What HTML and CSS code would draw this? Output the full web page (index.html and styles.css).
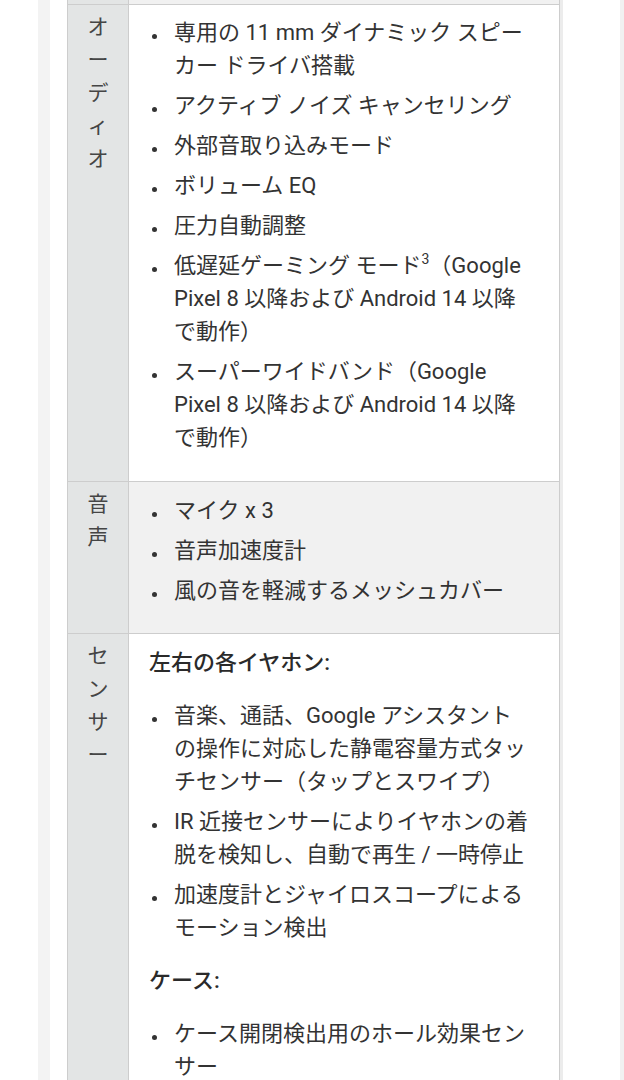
FILE: index.html
```html
<!DOCTYPE html>
<html lang="ja">
<head>
<meta charset="utf-8">
<title>仕様</title>
<link rel="stylesheet" href="styles.css">
</head>
<body>
<div class="page">
  <div class="frame">
    <table class="spec">
      <tr class="row-tail alt">
        <th></th>
        <td></td>
      </tr>
      <tr class="audio">
        <th>オーディオ</th>
        <td>
          <ul>
            <li><span>専用の 11 mm ダイナミック スピーカー ドライバ搭載</span></li>
            <li><span>アクティブ ノイズ キャンセリング</span></li>
            <li><span>外部音取り込みモード</span></li>
            <li><span>ボリューム EQ</span></li>
            <li><span>圧力自動調整</span></li>
            <li><span>低遅延ゲーミング モード<sup>3</sup>（Google Pixel 8 以降および Android 14 以降で動作）</span></li>
            <li><span>スーパーワイドバンド（Google Pixel 8 以降および Android 14 以降で動作）</span></li>
          </ul>
        </td>
      </tr>
      <tr class="alt">
        <th>音声</th>
        <td>
          <ul>
            <li><span>マイク x 3</span></li>
            <li><span>音声加速度計</span></li>
            <li><span>風の音を軽減するメッシュカバー</span></li>
          </ul>
        </td>
      </tr>
      <tr>
        <th>センサー</th>
        <td>
          <p class="lead">左右の各イヤホン:</p>
          <ul>
            <li><span>音楽、通話、Google アシスタントの操作に対応した静電容量方式タッチセンサー（タップとスワイプ）</span></li>
            <li><span>IR 近接センサーによりイヤホンの着脱を検知し、自動で再生 / 一時停止</span></li>
            <li><span>加速度計とジャイロスコープによるモーション検出</span></li>
          </ul>
          <p class="lead">ケース:</p>
          <ul>
            <li><span>ケース開閉検出用のホール効果センサー</span></li>
          </ul>
        </td>
      </tr>
    </table>
    <div class="shade"></div>
  </div>
</div>
</body>
</html>
```

FILE: styles.css
```css
html, body {
  margin: 0;
  height: 1080px;
  overflow: hidden;
  background: #ffffff;
}

body {
  font-family: "Roboto", "Noto Sans CJK JP", sans-serif;
  color: #333333;
}

.page {
  padding-left: 38px;
  height: 1080px;
}

.frame {
  display: flex;
  align-items: flex-start;
  height: 1080px;
  border-left: 12px solid #f3f3f3;
  border-right: 4px solid #f1f1f1;
  padding-left: 17px;
}

.shade {
  width: 3px;
  align-self: stretch;
  background: #ececec;
}

.spec {
  border-collapse: collapse;
  width: 493px;
  table-layout: fixed;
}

.spec th,
.spec td {
  border: 1px solid #cdcdcd;
  vertical-align: top;
}

.spec th {
  width: 61px;
  background: #e3e5e5;
  color: #454545;
  font-weight: 400;
  font-size: 21px;
  line-height: 33px;
  padding: 6px 14px 12px;
  text-align: center;
  line-break: anywhere;
  word-break: break-all;
  box-sizing: border-box;
}

.spec td {
  background: #ffffff;
  font-size: 22px;
  line-height: 33px;
  padding: 12px 28px 12px 20px;
}

.spec tr.alt td {
  background: #f1f1f1;
}

.spec tr.audio td {
  padding-top: 11px;
}

.spec tr.audio ul {
  margin-bottom: 15px;
}

.row-tail th,
.row-tail td {
  height: 4px;
  padding: 0;
  border-top: none;
  font-size: 0;
  line-height: 0;
}

.spec ul {
  list-style: none;
  margin: 0 0 14px;
  padding: 0;
}

.spec li {
  display: grid;
  grid-template-columns: 25px 1fr;
}

.spec li + li {
  margin-top: 7px;
}

.spec li::before {
  content: "";
  width: 5px;
  height: 5px;
  border-radius: 50%;
  background: #333333;
  margin: 18px 0 0 3px;
}

.spec sup {
  display: inline-block;
  font-size: 14px;
  line-height: 14px;
  vertical-align: top;
  margin-top: 3px;
}

.lead {
  margin: 0 0 20px;
  font-weight: 500;
  color: #2a2a2a;
}

.spec ul + .lead {
  margin-top: 20px;
}
```
